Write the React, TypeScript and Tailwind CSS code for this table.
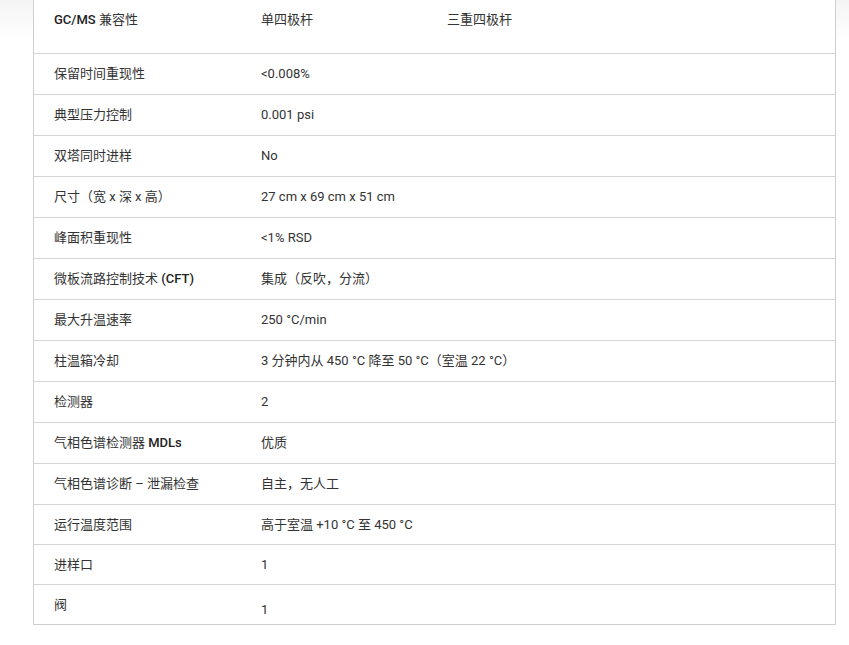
import React from 'react';

type Row = { label: React.ReactNode; value: string; h: string };

const rows: Row[] = [
  { label: '保留时间重现性', value: '<0.008%', h: 'h-[41px]' },
  { label: '典型压力控制', value: '0.001 psi', h: 'h-[41px]' },
  { label: '双塔同时进样', value: 'No', h: 'h-[41px]' },
  { label: '尺寸（宽 x 深 x 高）', value: '27 cm x 69 cm x 51 cm', h: 'h-[41px]' },
  { label: '峰面积重现性', value: '<1% RSD', h: 'h-[41px]' },
  {
    label: (
      <>
        微板流路控制技术 <span className="font-medium text-[#222]">(CFT)</span>
      </>
    ),
    value: '集成（反吹，分流）',
    h: 'h-[41px]',
  },
  { label: '最大升温速率', value: '250 °C/min', h: 'h-[41px]' },
  { label: '柱温箱冷却', value: '3 分钟内从 450 °C 降至 50 °C（室温 22 °C）', h: 'h-[41px]' },
  { label: '检测器', value: '2', h: 'h-[41px]' },
  {
    label: (
      <>
        气相色谱检测器 <span className="font-medium text-[#222]">MDLs</span>
      </>
    ),
    value: '优质',
    h: 'h-[41px]',
  },
  { label: '气相色谱诊断 – 泄漏检查', value: '自主，无人工', h: 'h-[41px]' },
  { label: '运行温度范围', value: '高于室温 +10 °C 至 450 °C', h: 'h-[40px]' },
  { label: '进样口', value: '1', h: 'h-[40px]' },
];

export default function App() {
  return (
    <div className="min-h-[645px] w-full bg-[linear-gradient(to_bottom,#f4f4f4,#ffffff_40px)] font-['Roboto','Noto_Sans_CJK_SC',sans-serif] text-[13px] text-[#333]">
      <div className="ml-[33px] w-[803px] border-x border-b border-[#cfcfcf] bg-white">
        {/* header row */}
        <div className="grid h-[54px] grid-cols-[227px_186px_1fr] border-b border-[#d4d4d4] pt-[10px]">
          <div className="pl-[20px]">
            <span className="font-medium text-[#222]">GC/MS</span> 兼容性
          </div>
          <div>单四极杆</div>
          <div>三重四极杆</div>
        </div>

        {rows.map((r, i) => (
          <div
            key={i}
            className={`grid ${r.h} grid-cols-[227px_1fr] items-center border-b border-[#d4d4d4]`}
          >
            <div className="pl-[20px]">{r.label}</div>
            <div>{r.value}</div>
          </div>
        ))}

        {/* last row */}
        <div className="grid h-[39px] grid-cols-[227px_1fr] items-center">
          <div className="pl-[20px]">阀</div>
          <div className="pt-[10px]">1</div>
        </div>
      </div>
    </div>
  );
}
